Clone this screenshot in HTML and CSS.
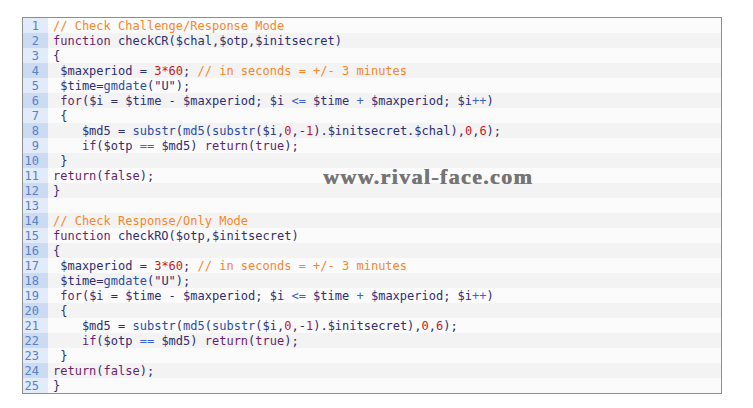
FILE: index.html
```html
<!DOCTYPE html>
<html>
<head>
<meta charset="utf-8">
<link rel="stylesheet" href="styles.css">
</head>
<body>
<div class="box">
  <div class="row"><span class="ln">1</span><span class="src"><span class="c">// Check Challenge/Response Mode</span></span></div>
  <div class="row"><span class="ln">2</span><span class="src"><span class="k">function</span> checkCR($chal,$otp,$initsecret)</span></div>
  <div class="row"><span class="ln">3</span><span class="src">{</span></div>
  <div class="row"><span class="ln">4</span><span class="src"> $maxperiod = <span class="n">3*60</span>; <span class="c">// in seconds = +/- 3 minutes</span></span></div>
  <div class="row"><span class="ln">5</span><span class="src"> $time=<span class="f">gmdate</span>("U");</span></div>
  <div class="row"><span class="ln">6</span><span class="src"> <span class="k">for</span>($i = $time - $maxperiod; $i <span class="o">&lt;=</span> $time <span class="o">+</span> $maxperiod; $i<span class="o">++</span>)</span></div>
  <div class="row"><span class="ln">7</span><span class="src"> {</span></div>
  <div class="row"><span class="ln">8</span><span class="src">    $md5 = <span class="f">substr</span>(<span class="f">md5</span>(<span class="f">substr</span>($i,<span class="n">0</span>,-<span class="n">1</span>).$initsecret.$chal),<span class="n">0</span>,<span class="n">6</span>);</span></div>
  <div class="row"><span class="ln">9</span><span class="src">    <span class="k">if</span>($otp <span class="o">==</span> $md5) <span class="k">return</span>(<span class="k">true</span>);</span></div>
  <div class="row"><span class="ln">10</span><span class="src"> }</span></div>
  <div class="row"><span class="ln">11</span><span class="src"><span class="k">return</span>(<span class="k">false</span>);</span></div>
  <div class="row"><span class="ln">12</span><span class="src">}</span></div>
  <div class="row"><span class="ln">13</span><span class="src"></span></div>
  <div class="row"><span class="ln">14</span><span class="src"><span class="c">// Check Response/Only Mode</span></span></div>
  <div class="row"><span class="ln">15</span><span class="src"><span class="k">function</span> checkRO($otp,$initsecret)</span></div>
  <div class="row"><span class="ln">16</span><span class="src">{</span></div>
  <div class="row"><span class="ln">17</span><span class="src"> $maxperiod = <span class="n">3*60</span>; <span class="c">// in seconds = +/- 3 minutes</span></span></div>
  <div class="row"><span class="ln">18</span><span class="src"> $time=<span class="f">gmdate</span>("U");</span></div>
  <div class="row"><span class="ln">19</span><span class="src"> <span class="k">for</span>($i = $time - $maxperiod; $i <span class="o">&lt;=</span> $time <span class="o">+</span> $maxperiod; $i<span class="o">++</span>)</span></div>
  <div class="row"><span class="ln">20</span><span class="src"> {</span></div>
  <div class="row"><span class="ln">21</span><span class="src">    $md5 = <span class="f">substr</span>(<span class="f">md5</span>(<span class="f">substr</span>($i,<span class="n">0</span>,-<span class="n">1</span>).$initsecret),<span class="n">0</span>,<span class="n">6</span>);</span></div>
  <div class="row"><span class="ln">22</span><span class="src">    <span class="k">if</span>($otp <span class="o">==</span> $md5) <span class="k">return</span>(<span class="k">true</span>);</span></div>
  <div class="row"><span class="ln">23</span><span class="src"> }</span></div>
  <div class="row"><span class="ln">24</span><span class="src"><span class="k">return</span>(<span class="k">false</span>);</span></div>
  <div class="row"><span class="ln">25</span><span class="src">}</span></div>
  <div class="watermark">www.rival-face.com</div>
</div>
</body>
</html>
```

FILE: styles.css
```css
html, body {
  margin: 0;
  padding: 0;
  background: #ffffff;
}
body {
  padding: 17px 0 0 22px;
}
.box {
  position: relative;
  width: 698px;
  border: 1px solid #8e8e8e;
  font-family: "DejaVu Sans Mono", monospace;
  font-size: 12px;
  line-height: 14px;
  color: #2e2e72;
}
.row {
  display: flex;
  height: 15px;
  background: #fbfbfb;
}
.row:nth-child(even) {
  background: #f3f3f3;
}
.ln {
  flex: 0 0 25px;
  box-sizing: border-box;
  padding: 1px 9px 0 0;
  text-align: right;
  color: #5a80c8;
  background: #e1ebfa;
}
.row:nth-child(even) .ln {
  background: #cbdbf2;
}
.src {
  padding: 1px 0 0 5px;
  white-space: pre;
}
.c { color: #f7862a; }
.k { color: #6a1f6a; }
.f { color: #2a4ea8; }
.n { color: #c8181f; }
.o { color: #3d5fd0; }
.watermark {
  position: absolute;
  left: 300px;
  top: 149px;
  font-family: "Liberation Serif", serif;
  font-weight: bold;
  font-size: 22px;
  line-height: 20px;
  letter-spacing: 1.35px;
  color: #757575;
  text-shadow: 0.6px 0 0 #757575;
}
```
